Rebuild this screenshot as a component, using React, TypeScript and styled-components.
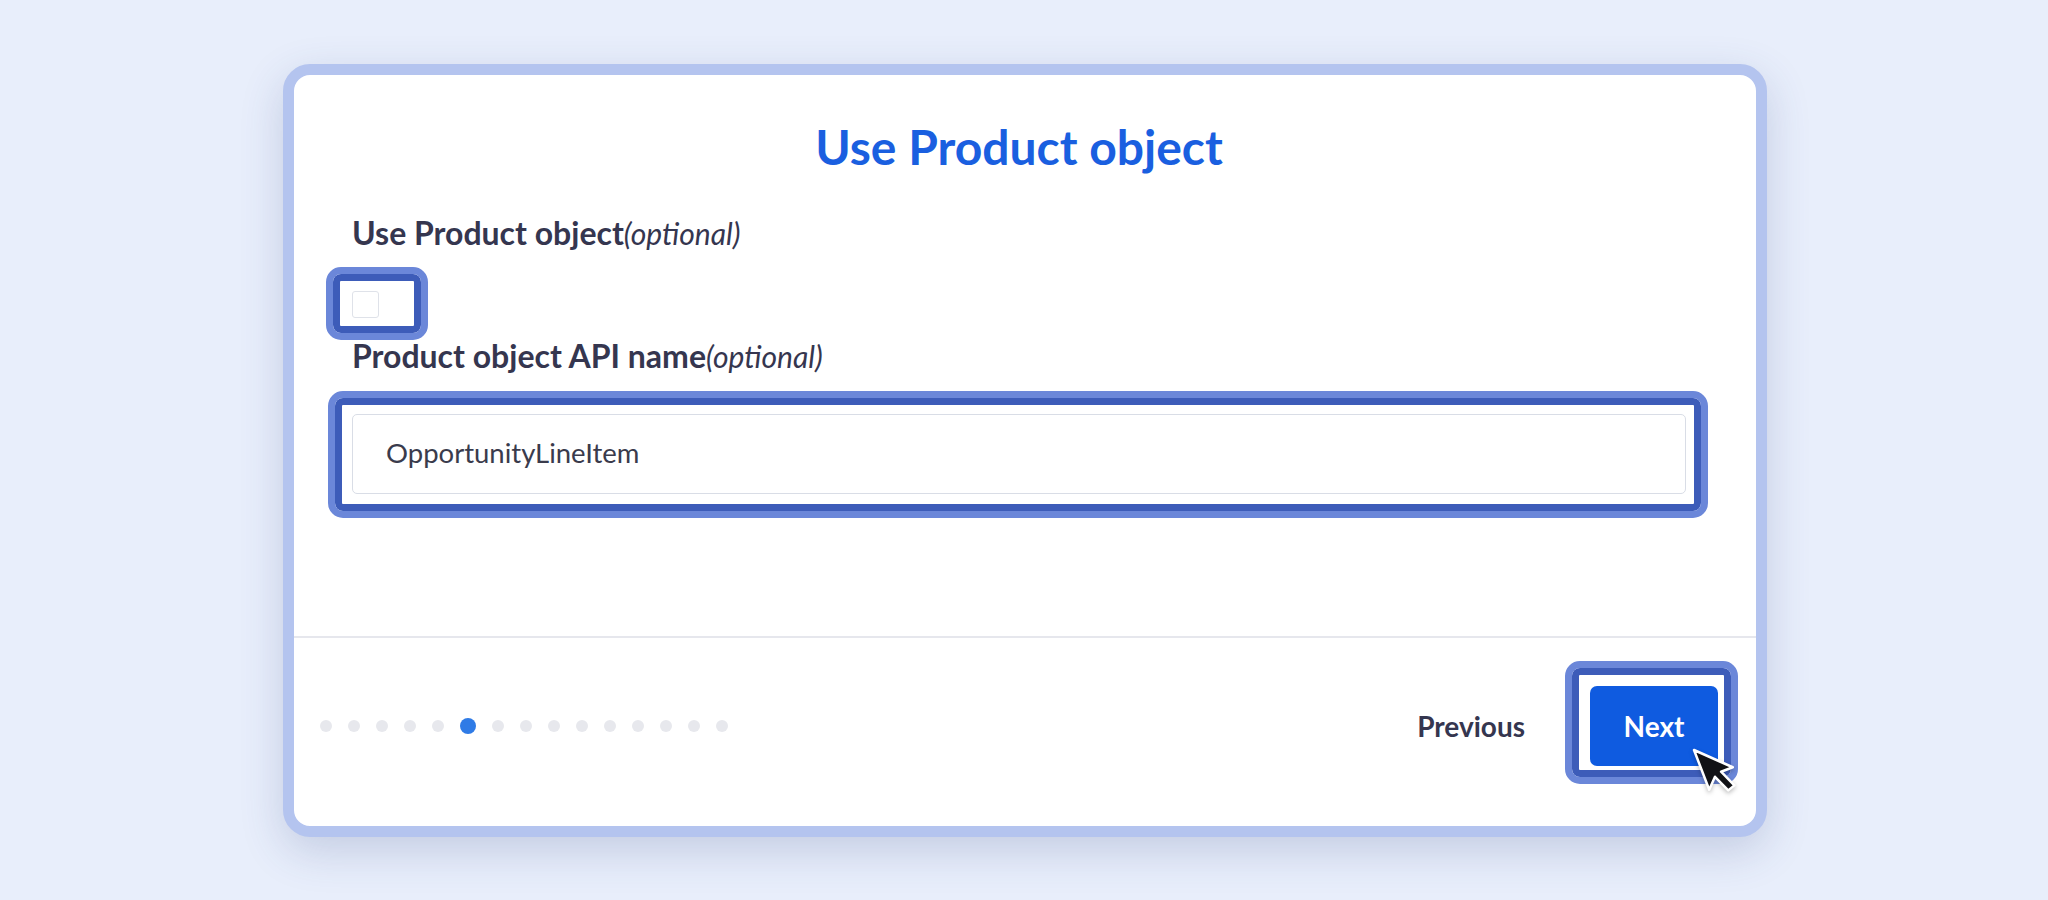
import React from "react";
import styled, { createGlobalStyle } from "styled-components";

const Global = createGlobalStyle`
  html, body { margin: 0; padding: 0; }
  body {
    background: #e8eefb;
    font-family: "Lato", "Noto Sans", sans-serif;
  }
  * { box-sizing: border-box; }
`;

const Page = styled.div`
  width: 2048px;
  height: 900px;
  display: flex;
  align-items: center;
  justify-content: center;
`;

const Card = styled.div`
  width: 1484px;
  height: 773px;
  border: 11px solid #b4c4ef;
  border-radius: 27px;
  background: #ffffff;
  display: flex;
  flex-direction: column;
  box-shadow: 0 14px 44px rgba(50, 70, 130, 0.2);
  transform: translateX(1px);
`;

const Body = styled.div`
  flex: 1;
  padding: 43px 70px 0 58px;
  display: flex;
  flex-direction: column;
  align-items: flex-start;
`;

const Title = styled.h1`
  margin: 0;
  align-self: stretch;
  text-align: center;
  font-size: 48px;
  line-height: 1.2;
  font-weight: 700;
  color: #1a5fe0;
`;

const Label = styled.label<{ $top: number }>`
  display: block;
  margin-top: ${(p) => p.$top}px;
  font-size: 32px;
  line-height: 36px;
  font-weight: 700;
  color: #35364f;
`;

const Optional = styled.span`
  font-size: 30px;
  font-style: italic;
  font-weight: 400;
`;

const Highlighted = styled.div<{ $w?: string }>`
  position: relative;
  width: ${(p) => p.$w ?? "auto"};
`;

const Ring = styled.span<{ $t: number; $r: number; $b: number; $l: number }>`
  position: absolute;
  top: -${(p) => p.$t}px;
  right: -${(p) => p.$r}px;
  bottom: -${(p) => p.$b}px;
  left: -${(p) => p.$l}px;
  border: 7px solid #6b87d9;
  border-radius: 15px;
  box-shadow: inset 0 0 0 7px #3d5cb9;
  pointer-events: none;
`;

const CheckRow = styled(Highlighted)`
  margin-top: 40px;
  height: 26px;
  display: flex;
  align-items: center;
`;

const Checkbox = styled.span`
  display: block;
  width: 27px;
  height: 27px;
  border: 1.5px solid #dfe2e9;
  border-radius: 3px;
  background: #fff;
`;

const InputWrap = styled(Highlighted)`
  margin-top: 40px;
  align-self: stretch;
`;

const Input = styled.div`
  height: 80px;
  border: 1.5px solid #d9dde6;
  border-radius: 5px;
  display: flex;
  align-items: center;
  padding-left: 33px;
  padding-bottom: 3px;
  font-size: 27.5px;
  color: #3a3b4c;
`;

const Divider = styled.div`
  height: 2px;
  background: #e6e7ed;
`;

const Footer = styled.div`
  height: 188px;
  padding: 0 38px 12px 26px;
  display: flex;
  align-items: center;
  justify-content: space-between;
`;

const Dots = styled.div`
  display: flex;
  align-items: center;
  gap: 16px;
`;

const Dot = styled.span<{ $active?: boolean }>`
  width: ${(p) => (p.$active ? 16 : 12)}px;
  height: ${(p) => (p.$active ? 16 : 12)}px;
  border-radius: 50%;
  background: ${(p) => (p.$active ? "#2f7be6" : "#e7e8ed")};
`;

const Actions = styled.div`
  display: flex;
  align-items: center;
  gap: 65px;
`;

const Prev = styled.button`
  border: none;
  background: none;
  padding: 0;
  font-family: inherit;
  font-size: 28px;
  font-weight: 700;
  color: #35364f;
`;

const NextButton = styled.button`
  width: 128px;
  height: 80px;
  border: none;
  border-radius: 7px;
  background: #0f5be0;
  color: #fff;
  font-family: inherit;
  font-size: 28px;
  font-weight: 700;
`;

const Cursor = styled.svg`
  position: absolute;
  left: 100px;
  top: 60px;
  width: 60px;
  height: 60px;
  overflow: visible;
  filter: drop-shadow(0 2px 2px rgba(0, 0, 0, 0.25));
`;

export default function App() {
  const dots = Array.from({ length: 15 }, (_, i) => i);
  return (
    <>
      <Global />
      <Page>
        <Card>
          <Body>
            <Title>Use Product object</Title>
            <Label $top={40}>
              Use Product object<Optional>(optional)</Optional>
            </Label>
            <CheckRow $w="54px">
              <Checkbox />
              <Ring $t={24} $r={22} $b={23} $l={26} />
            </CheckRow>
            <Label $top={21}>
              Product object API name<Optional>(optional)</Optional>
            </Label>
            <InputWrap>
              <Input>OpportunityLineItem</Input>
              <Ring $t={23} $r={22} $b={24} $l={24} />
            </InputWrap>
          </Body>
          <Divider />
          <Footer>
            <Dots>
              {dots.map((i) => (
                <Dot key={i} $active={i === 5} />
              ))}
            </Dots>
            <Actions>
              <Prev>Previous</Prev>
              <Highlighted>
                <NextButton>Next</NextButton>
                <Ring $t={25} $r={20} $b={18} $l={25} />
                <Cursor viewBox="0 0 60 60">
                  <g transform="translate(4 4) rotate(-21) scale(2.5)">
                    <path
                      d="M0 0 L0 17 L4 13 L7 20 L10 19 L7 12 L12 12 Z"
                      fill="#111216"
                      stroke="#ffffff"
                      strokeWidth="1"
                      strokeLinejoin="round"
                    />
                  </g>
                </Cursor>
              </Highlighted>
            </Actions>
          </Footer>
        </Card>
      </Page>
    </>
  );
}
